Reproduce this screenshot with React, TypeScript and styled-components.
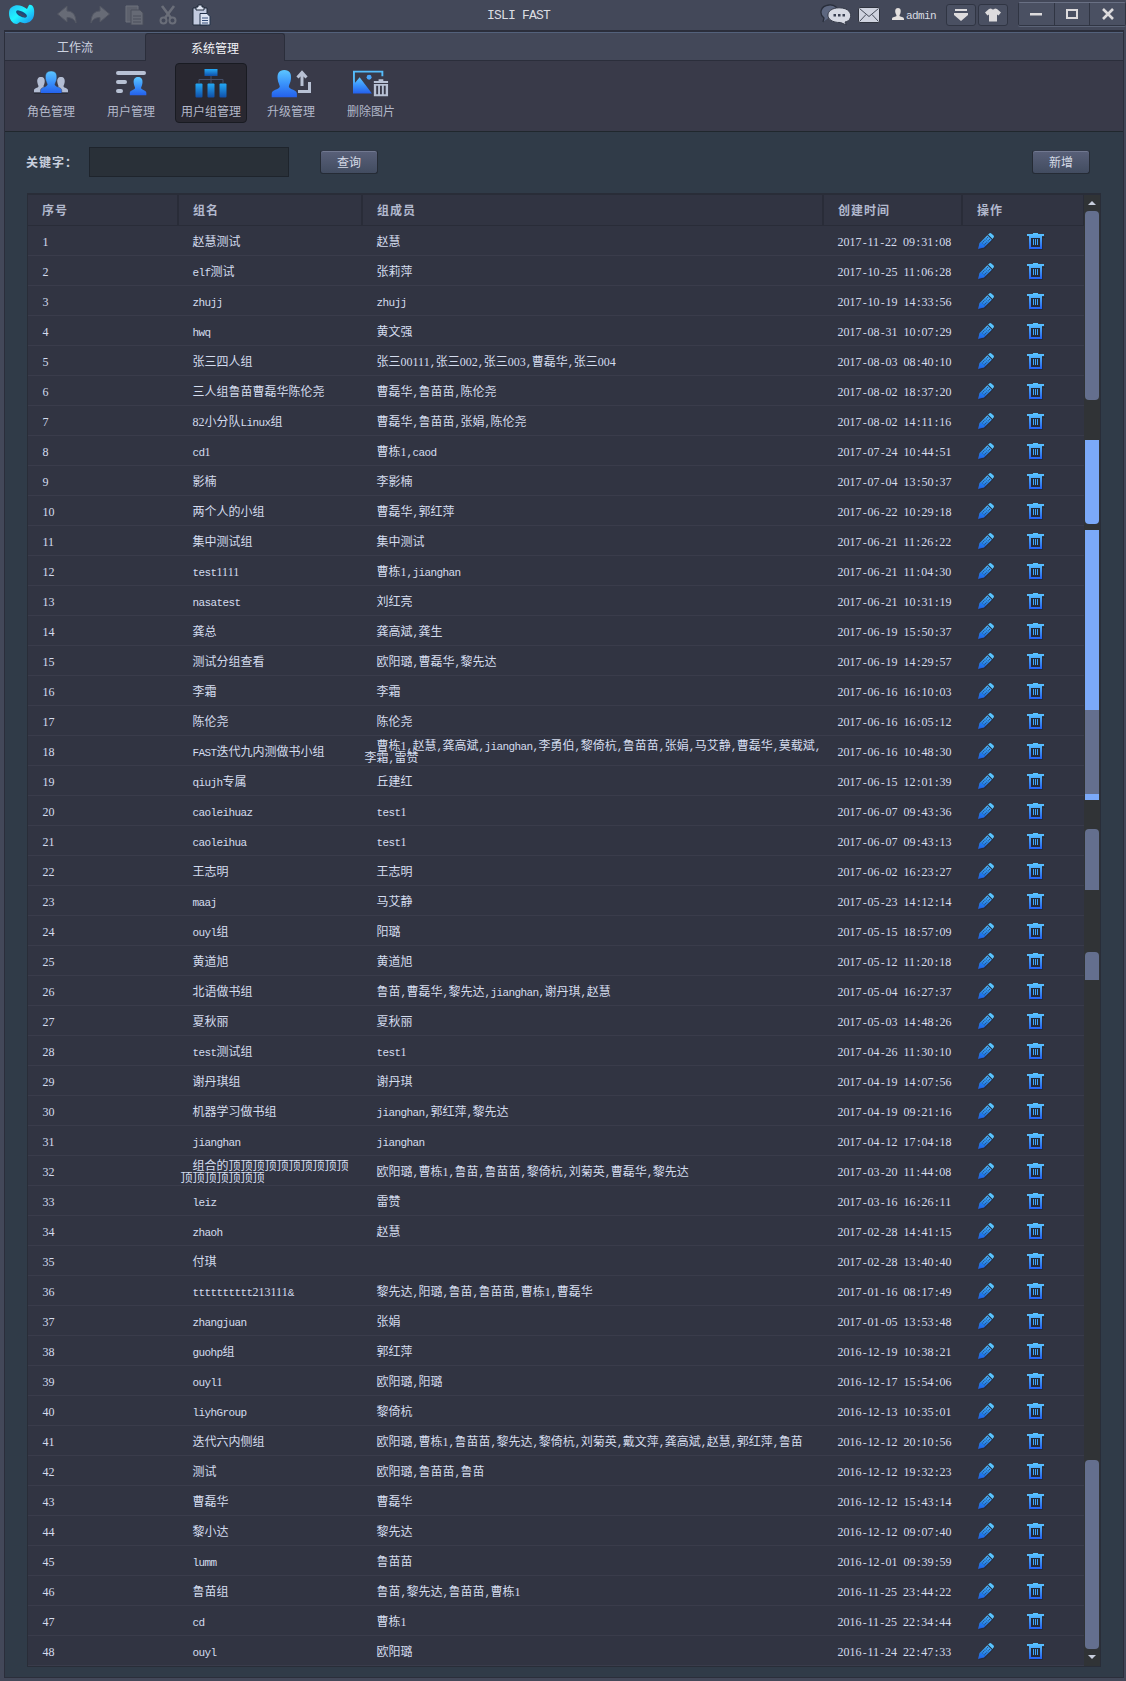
import React from 'react';
import styled, { createGlobalStyle, css } from 'styled-components';

const GlobalStyle = createGlobalStyle`
  * { box-sizing: border-box; }
  html, body { margin: 0; padding: 0; }
  body {
    background: #434859;
    font: 12px/12px "Noto Sans CJK SC", sans-serif;
    color: #d4dcee;
    overflow: hidden;
  }
  svg { display: block; flex: none; }
`;

/* Half-width characters sit on a 6px grid beside 12px ideographs. */
const Digits = styled.span`
  font-family: 'Liberation Serif', serif;
  font-size: 12px;
  line-height: 0;
`;
const Latin = styled.span`
  font-family: 'Liberation Mono', monospace;
  font-size: 11px;
  line-height: 0;
  letter-spacing: -0.6px;
  white-space: pre;
`;

function Mixed({ text }: { text: string }) {
  const parts = text.match(/[0-9]+|[\x20-\x2f\x3a-\x7e]+|[^\x20-\x7e]+/g) || [];
  return (
    <>
      {parts.map((p, i) =>
        /^[0-9]/.test(p) ? <Digits key={i}>{p}</Digits> : /^[\x20-\x7e]/.test(p) ? <Latin key={i}>{p}</Latin> : p
      )}
    </>
  );
}

const Window = styled.div`
  width: 1126px;
  height: 1681px;
  display: flex;
  flex-direction: column;
  padding: 0 2px 3px 4px;
  background: #434859;
`;

const TitleBar = styled.header`
  height: 30px;
  flex: none;
  display: grid;
  grid-template-columns: 483px 333px 1fr;
  margin-right: -2px;
`;
const QuickTools = styled.div`
  display: flex;
  align-items: flex-start;
  padding: 4px 0 0 4px;
`;
const Tool = styled.div<{ $ml: number; $dim?: boolean }>`
  margin-left: ${p => p.$ml}px;
  opacity: ${p => (p.$dim ? 0.9 : 1)};
`;
const AppTitle = styled.div`
  font: 13px/30px 'Liberation Mono', monospace;
  letter-spacing: -0.8px;
  color: #dcdde2;
  white-space: pre;
  padding-top: 1px;
`;
const StatusArea = styled.div`
  display: flex;
  align-items: flex-start;
`;
const StatusIcon = styled.div<{ $left: number; $top: number }>`
  padding: ${p => p.$top}px 0 0 ${p => p.$left}px;
`;
const UserName = styled.span`
  width: 39px;
  padding-left: 2px;
  line-height: 28px;
  color: #d9dbe2;
`;
const SquareButton = styled.div`
  width: 30px;
  height: 22px;
  margin: 4px 2px 0 0;
  border: 1px solid #303543;
  border-radius: 3px;
  background: #4a5062;
  display: flex;
  align-items: center;
  justify-content: center;
`;
const WindowControls = styled.div`
  display: flex;
  margin: 2px 0 0 8px;
  height: 24px;
  width: 108px;
  border: 1px solid #303543;
  border-top-color: #697084;
  box-shadow: 0 1px #5b6377;
  border-radius: 2px;
  background: #4a5062;
`;
const WindowControl = styled.div`
  flex: 1;
  display: flex;
  align-items: center;
  justify-content: center;
  & + & { border-left: 1px solid #303543; }
`;

const Frame = styled.div`
  flex: 1;
  display: flex;
  flex-direction: column;
  border: 1px solid #2b2e3b;
  border-top-width: 2px;
  background: #303b48;
`;
const Tabs = styled.nav`
  height: 29px;
  flex: none;
  display: flex;
  border-top: 1px solid #53617b;
  border-bottom: 1px solid #2b2e3b;
  background: #434859;
`;
const Tab = styled.div<{ $active?: boolean }>`
  width: 140px;
  text-align: center;
  line-height: 27px;
  color: #cdd3e0;
  ${p => p.$active && css`
    height: 28px;
    line-height: 27px;
    color: #f2f3f7;
    background: #393a49;
    border: 1px solid #2b2e3b;
    border-bottom: 0;
    border-radius: 3px 3px 0 0;
  `}
`;
const Ribbon = styled.div`
  height: 71px;
  flex: none;
  display: flex;
  gap: 8px;
  padding: 2px 10px 0;
  background: #393a49;
  border-bottom: 1px solid #20272d;
`;
const RibbonItem = styled.div<{ $active?: boolean }>`
  width: 72px;
  height: 60px;
  display: flex;
  flex-direction: column;
  align-items: center;
  border: 1px solid ${p => (p.$active ? '#191b22' : 'transparent')};
  border-radius: 4px;
  background: ${p => (p.$active ? '#292831' : 'transparent')};
  color: #b3b8ca;
  padding-top: 4px;
  white-space: nowrap;
`;
const RibbonLabel = styled.div`
  margin-top: 6px;
  line-height: 14px;
`;

const SearchBar = styled.div`
  height: 61px;
  flex: none;
  display: flex;
  align-items: center;
  padding: 0 33px 1px 21px;
`;
const FieldLabel = styled.label`
  width: 63px;
  font-weight: 700;
  letter-spacing: 1px;
  color: #c9d0de;
`;
const Field = styled.input`
  width: 200px;
  height: 30px;
  border: 1px solid #1e242c;
  background: #293038;
  color: #d0d9ec;
  outline: 0;
  padding: 0 6px;
`;
const Button = styled.button<{ $push?: boolean }>`
  width: 58px;
  height: 24px;
  padding: 0;
  margin-left: ${p => (p.$push ? 'auto' : '31px')};
  border: 1px solid #252b35;
  border-top-color: #303746;
  border-radius: 3px;
  background: linear-gradient(#596079, #424c60);
  box-shadow: inset 0 1px #717890;
  font: 12px/20px "Noto Sans CJK SC", sans-serif;
  color: #d5dae6;
`;

const TablePanel = styled.section`
  width: 1074px;
  height: 1474px;
  margin-left: 22px;
  display: flex;
  border: 1px solid #292d38;
  border-top-width: 2px;
  background: #313442;
`;
const Table = styled.div`
  width: 1056px;
`;
const rowGrid = css`
  display: grid;
  grid-template-columns: 151px 184px 461px 139px 121px;
`;
const HeadRow = styled.div`
  ${rowGrid}
  height: 31px;
  border-bottom: 1px solid #292c38;
`;
const HeadCell = styled.div`
  padding: 9px 0 0 14px;
  font-weight: 700;
  letter-spacing: 1px;
  color: #b2b9ce;
  border-right: 2px solid #292c38;
  &:last-child { border-right-width: 1px; }
`;
const Row = styled.div`
  ${rowGrid}
  height: 30px;
  border-bottom: 1px solid #3a3c4b;
  align-items: center;
`;
const Cell = styled.div`
  padding-left: 1.5px;
  text-indent: 12px;
  white-space: pre;
  line-height: 12px;
  & > * { text-indent: 0; }
  &:first-child { padding-left: 2.5px; }
`;
const Actions = styled.div`
  display: flex;
  gap: 32px;
  padding: 2px 0 0 15px;
`;

const Track = styled.div`
  width: 16px;
  display: flex;
  flex-direction: column;
  align-items: center;
  background: #303336;
`;
const Arrow = styled.div<{ $down?: boolean }>`
  height: 16px;
  display: flex;
  align-items: center;
  transform: ${p => (p.$down ? 'rotate(180deg)' : 'none')};
`;
const Piece = styled.div<{ $h: number; $gap?: number; $blue?: boolean; $r?: string }>`
  width: 14px;
  flex: none;
  height: ${p => p.$h}px;
  margin-top: ${p => p.$gap || 0}px;
  border-radius: ${p => p.$r || '0'};
  background: ${p => (p.$blue ? '#7ba9f8' : '#646f8e')};
`;

const Gradients = () => (
  <svg width="0" height="0" aria-hidden>
    <defs>
      <linearGradient id="blue" x1="0" y1="0" x2="0" y2="1">
        <stop offset="0" stopColor="#5cc6ff" />
        <stop offset="0.5" stopColor="#3a92fb" />
        <stop offset="1" stopColor="#2460ec" />
      </linearGradient>
      <linearGradient id="trash" gradientUnits="userSpaceOnUse" x1="0" y1="0" x2="0" y2="17">
        <stop offset="0" stopColor="#5cc8ff" />
        <stop offset="1" stopColor="#205af0" />
      </linearGradient>
      <linearGradient id="pen" gradientUnits="userSpaceOnUse" x1="0" y1="0" x2="0" y2="17">
        <stop offset="0" stopColor="#58c4ff" />
        <stop offset="0.6" stopColor="#2a86e8" />
        <stop offset="1" stopColor="#1d50d8" />
      </linearGradient>
      <linearGradient id="node" x1="0" y1="0" x2="0" y2="1">
        <stop offset="0" stopColor="#24a9f5" />
        <stop offset="1" stopColor="#104fa8" />
      </linearGradient>
      <linearGradient id="logo" x1="0" y1="0" x2="1" y2="1">
        <stop offset="0" stopColor="#25b9f5" />
        <stop offset="0.45" stopColor="#20f3ff" />
        <stop offset="1" stopColor="#1687ef" />
      </linearGradient>
    </defs>
  </svg>
);

const Pencil = () => (
  <svg width="17" height="17" viewBox="0 0 17 17">
    <path d="M1 17 L2.4 11.8 L11.2 3 L16.4 5.6 L7 15.4Z" fill="#232633" opacity=".6" />
    <path d="M0 16 L1.6 10 L9.4 2.2 L13.9 6.7 L6 14.5Z" fill="url(#pen)" />
    <path d="M10.1 1.6 L11.6 .3 Q12.5 -.3 13.3 .4 L15.6 2.6 Q16.3 3.4 15.7 4.2 L14.5 5.9Z" fill="#58c4ff" />
    <path d="M3.9 10.3 L10.2 4 M5.8 12.2 L12.1 5.9" stroke="#1f4f80" strokeWidth="1.1" strokeDasharray="1 .9" />
    <path d="M1.9 10.4 L5.6 14.1" stroke="#1a74f4" strokeWidth="1.4" />
  </svg>
);
const Trash = () => (
  <svg width="18" height="17" viewBox="0 0 18 17">
    <path d="M3 5h12.6v12H3z M1 4h17v1H1z" fill="#242733" />
    <path fillRule="evenodd" fill="url(#trash)" d="M0 1h6V0h5v1h6v2h-2v13H2V3H0z M4 5v9h9V5z" />
    <path d="M6.5 6v6 M8.5 6v6 M10.5 6v6" stroke="#3fa6fb" />
  </svg>
);

const bust = 'M6 0 C9 0 10 2 9.7 5 C9.5 7 8.7 8 8.5 9 C9 11 13 10.5 13 13 V15 H-1 V13 C-1 10.5 3 11 3.5 9 C3.3 8 2.5 7 2.3 5 C2 2 3 0 6 0Z';

const RolesIcon = () => (
  <svg width="38" height="28" viewBox="0 0 38 28">
    <g fill="#b3bdd3">
      <g transform="translate(3 8)"><path d={bust} transform="scale(1 1.02)" /></g>
      <g transform="translate(23 8)"><path d={bust} transform="scale(1 1.02)" /></g>
    </g>
    <g transform="translate(10 2)">
      <path d={bust} transform="scale(1.52 1.5)" fill="url(#blue)" stroke="#393a49" strokeWidth=".3" />
    </g>
    <path d="M2 24.5h34" stroke="#292d38" />
  </svg>
);
const UsersIcon = () => (
  <svg width="32" height="28" viewBox="0 0 32 28">
    <path d="M3 4H29 M3 13H10 M3 22H6" stroke="#b8c1d4" strokeWidth="4" strokeLinecap="round" />
    <g transform="translate(16 8)"><path d={bust} transform="scale(1.18 1.22)" fill="url(#blue)" /></g>
  </svg>
);
const GroupsIcon = () => (
  <svg width="34" height="30" viewBox="0 0 34 30">
    <path d="M17 8V15 M5 15V11.5H29V15" fill="none" stroke="#46506a" />
    <rect x="10.5" y="1" width="13" height="7" fill="url(#node)" />
    <rect x="1.5" y="15.5" width="7" height="14" rx="1" fill="url(#node)" />
    <rect x="13.5" y="15.5" width="7" height="14" rx="1" fill="url(#node)" />
    <rect x="25.5" y="15.5" width="7" height="14" rx="1" fill="url(#node)" />
  </svg>
);
const UpgradeIcon = () => (
  <svg width="40" height="29" viewBox="0 0 40 29">
    <g transform="translate(2.5 1)"><path d={bust} transform="scale(1.8 1.82)" fill="url(#blue)" /></g>
    <path d="M31 17V5 M26.5 8.5L31 3.5L35.5 8.5" fill="none" stroke="#b8c1d4" strokeWidth="3" />
    <path d="M27 22.5H38.5V13" fill="none" stroke="#b8c1d4" strokeWidth="3" />
  </svg>
);
const RemoveImageIcon = () => (
  <svg width="36" height="30" viewBox="0 0 38 30">
    <path d="M1 25V3H31V8" fill="none" stroke="#55bcfb" strokeWidth="2" />
    <path d="M0 10V26H20L7 9L2 15Z" fill="url(#blue)" />
    <circle cx="17" cy="9" r="2.6" fill="#48a5fb" />
    <path fillRule="evenodd" fill="#b8c1d4" d="M22 13h5v-2h5v2h5v2H22z M22 16h15v13H22z M24.5 18v9h2v-9z M28.5 18v9h2v-9z M32.5 18v9h2v-9z" />
  </svg>
);

const Logo = () => (
  <svg width="28" height="22" viewBox="0 0 28 22">
    <path d="M4 3 C8 0 14 1 19 5 L21 1 C25 0 27 5 26 11 C25 18 18 21 12 18 L9 20 C4 20 1 15 1 9 C1 6 2 4 4 3Z" fill="url(#logo)" />
    <ellipse cx="13.5" cy="10" rx="6" ry="2.6" transform="rotate(28 13.5 10)" fill="#1b4a7c" />
    <path d="M10 9 C12.5 9 14 13 17.500 12.500" fill="none" stroke="#3e4b64" strokeWidth="1.5" />
  </svg>
);
const Undo = ({ flip }: { flip?: boolean }) => (
  <svg width="20" height="21" viewBox="0 0 20 21">
    <path
      transform={flip ? 'translate(20 0) scale(-1 1)' : undefined}
      d="M0.5 10 L10 2 V7 C16 7 19 11 19 19 C17 15 14 13.5 10 13.5 V18Z"
      fill="#6b6f7a"
      stroke="#555965"
    />
  </svg>
);
const Copy = () => (
  <svg width="20" height="21" viewBox="0 0 20 21">
    <path d="M1 2h12v16H1z" fill="#606470" stroke="#737680" />
    <path d="M6 6h9l3 3v12H6z" fill="#6a6e79" stroke="#4c505c" />
    <path d="M8 12h8 M8 15h8 M8 18h8" stroke="#4d515d" />
  </svg>
);
const Scissors = () => (
  <svg width="18" height="21" viewBox="0 0 18 21">
    <path d="M3 2 L12 14 M15 2 L6 14" stroke="#6f737d" strokeWidth="2.6" />
    <circle cx="4.5" cy="16.5" r="3" fill="none" stroke="#6f737d" strokeWidth="2" />
    <circle cx="13.5" cy="16.5" r="3" fill="none" stroke="#6f737d" strokeWidth="2" />
  </svg>
);
const Paste = () => (
  <svg width="19" height="22" viewBox="0 0 19 22">
    <path d="M1 4h14v17H1z" fill="#c3cbe0" stroke="#202a3b" />
    <path d="M4 6V3h2V1h4v2h2v3z" fill="#dfe5f2" stroke="#202a3b" />
    <path d="M8 9.5h7l3 3V21H8z" fill="#dce3f2" stroke="#23324b" />
    <path d="M10 14h6 M10 16.5h6 M10 19h6" stroke="#344d78" />
  </svg>
);
const Chat = () => (
  <svg width="31" height="22" viewBox="0 0 31 22">
    <path d="M3 18 L4 14 C-1 10 0 2 9 1 C15 .5 18 4 18 7" fill="#5d6780" stroke="#292e3b" strokeWidth="1.3" />
    <path d="M19 3.8 C34 3.8 33 17 25 18 L26.5 21 L20.5 18.5 C4 19 4 4 19 3.8Z" fill="#d6d9e3" stroke="#343947" />
    <path d="M13.500 10h2.500v2.500h-2.500z M18 10h2.500v2.500h-2.500z M22.500 10h2.500v2.500h-2.500z" fill="#394052" />
  </svg>
);
const Mail = () => (
  <svg width="22" height="16" viewBox="0 0 22 16">
    <rect x=".5" y=".5" width="21" height="15" rx="1" fill="#cfd3df" stroke="#30343f" />
    <path d="M1.5 1.5 L11 9.5 L20.5 1.5 M1.5 14.5 L8 7.5 M20.5 14.5 L14 7.5" fill="none" stroke="#454b59" />
  </svg>
);
const Person = () => (
  <svg width="12" height="13" viewBox="0 0 12 13">
    <path d="M6 0C9 0 9 3 8.5 5C8 6.3 7.5 7 7.5 8C8 9 12 8.5 12 11V12H0V11C0 8.5 4 9 4.5 8C4.5 7 4 6.3 3.5 5C3 3 3 0 6 0Z" fill="#e4e0de" />
  </svg>
);

type Entry = [string, string, string];
const entries: Entry[] = [
  ['赵慧测试', '赵慧', '2017-11-22 09:31:08'],
  ['elf测试', '张莉萍', '2017-10-25 11:06:28'],
  ['zhujj', 'zhujj', '2017-10-19 14:33:56'],
  ['hwq', '黄文强', '2017-08-31 10:07:29'],
  ['张三四人组', '张三00111,张三002,张三003,曹磊华,张三004', '2017-08-03 08:40:10'],
  ['三人组鲁苗曹磊华陈伦尧', '曹磊华,鲁苗苗,陈伦尧', '2017-08-02 18:37:20'],
  ['82小分队Linux组', '曹磊华,鲁苗苗,张娟,陈伦尧', '2017-08-02 14:11:16'],
  ['cd1', '曹栋1,caod', '2017-07-24 10:44:51'],
  ['影楠', '李影楠', '2017-07-04 13:50:37'],
  ['两个人的小组', '曹磊华,郭红萍', '2017-06-22 10:29:18'],
  ['集中测试组', '集中测试', '2017-06-21 11:26:22'],
  ['test1111', '曹栋1,jianghan', '2017-06-21 11:04:30'],
  ['nasatest', '刘红亮', '2017-06-21 10:31:19'],
  ['龚总', '龚高斌,龚生', '2017-06-19 15:50:37'],
  ['测试分组查看', '欧阳璐,曹磊华,黎先达', '2017-06-19 14:29:57'],
  ['李霜', '李霜', '2017-06-16 16:10:03'],
  ['陈伦尧', '陈伦尧', '2017-06-16 16:05:12'],
  ['FAST迭代九内测做书小组', '曹栋1,赵慧,龚高斌,jianghan,李勇伯,黎倚杭,鲁苗苗,张娟,马艾静,曹磊华,莫载斌,\n李霜,雷赞', '2017-06-16 10:48:30'],
  ['qiujh专属', '丘建红', '2017-06-15 12:01:39'],
  ['caoleihuaz', 'test1', '2017-06-07 09:43:36'],
  ['caoleihua', 'test1', '2017-06-07 09:43:13'],
  ['王志明', '王志明', '2017-06-02 16:23:27'],
  ['maaj', '马艾静', '2017-05-23 14:12:14'],
  ['ouyl组', '阳璐', '2017-05-15 18:57:09'],
  ['黄道旭', '黄道旭', '2017-05-12 11:20:18'],
  ['北语做书组', '鲁苗,曹磊华,黎先达,jianghan,谢丹琪,赵慧', '2017-05-04 16:27:37'],
  ['夏秋丽', '夏秋丽', '2017-05-03 14:48:26'],
  ['test测试组', 'test1', '2017-04-26 11:30:10'],
  ['谢丹琪组', '谢丹琪', '2017-04-19 14:07:56'],
  ['机器学习做书组', 'jianghan,郭红萍,黎先达', '2017-04-19 09:21:16'],
  ['jianghan', 'jianghan', '2017-04-12 17:04:18'],
  ['组合的顶顶顶顶顶顶顶顶顶顶\n顶顶顶顶顶顶顶', '欧阳璐,曹栋1,鲁苗,鲁苗苗,黎倚杭,刘菊英,曹磊华,黎先达', '2017-03-20 11:44:08'],
  ['leiz', '雷赞', '2017-03-16 16:26:11'],
  ['zhaoh', '赵慧', '2017-02-28 14:41:15'],
  ['付琪', '', '2017-02-28 13:40:40'],
  ['tttttttttt213111&', '黎先达,阳璐,鲁苗,鲁苗苗,曹栋1,曹磊华', '2017-01-16 08:17:49'],
  ['zhangjuan', '张娟', '2017-01-05 13:53:48'],
  ['guohp组', '郭红萍', '2016-12-19 10:38:21'],
  ['ouyl1', '欧阳璐,阳璐', '2016-12-17 15:54:06'],
  ['liyhGroup', '黎倚杭', '2016-12-13 10:35:01'],
  ['迭代六内侧组', '欧阳璐,曹栋1,鲁苗苗,黎先达,黎倚杭,刘菊英,戴文萍,龚高斌,赵慧,郭红萍,鲁苗', '2016-12-12 20:10:56'],
  ['测试', '欧阳璐,鲁苗苗,鲁苗', '2016-12-12 19:32:23'],
  ['曹磊华', '曹磊华', '2016-12-12 15:43:14'],
  ['黎小达', '黎先达', '2016-12-12 09:07:40'],
  ['lumm', '鲁苗苗', '2016-12-01 09:39:59'],
  ['鲁苗组', '鲁苗,黎先达,鲁苗苗,曹栋1', '2016-11-25 23:44:22'],
  ['cd', '曹栋1', '2016-11-25 22:34:44'],
  ['ouyl', '欧阳璐', '2016-11-24 22:47:33'],
];

const ribbon = [
  { label: '角色管理', Icon: RolesIcon },
  { label: '用户管理', Icon: UsersIcon },
  { label: '用户组管理', Icon: GroupsIcon, active: true },
  { label: '升级管理', Icon: UpgradeIcon },
  { label: '删除图片', Icon: RemoveImageIcon },
];

const IconSlot = styled.div`
  height: 30px;
  display: flex;
  align-items: center;
`;

const Triangle = () => (
  <svg width="8" height="4" viewBox="0 0 8 4"><path d="M0 4L4 0L8 4Z" fill="#c8cede" /></svg>
);

export default function App() {
  return (
    <Window>
      <GlobalStyle />
      <TitleBar>
        <QuickTools>
          <Logo />
          <Tool $ml={21} $dim><Undo /></Tool>
          <Tool $ml={13} $dim><Undo flip /></Tool>
          <Tool $ml={15} $dim><Copy /></Tool>
          <Tool $ml={14} $dim><Scissors /></Tool>
          <Tool $ml={15}><Paste /></Tool>
        </QuickTools>
        <AppTitle>ISLI FAST</AppTitle>
        <StatusArea>
          <StatusIcon $left={0} $top={4}><Chat /></StatusIcon>
          <StatusIcon $left={7} $top={7}><Mail /></StatusIcon>
          <StatusIcon $left={12} $top={8}><Person /></StatusIcon>
          <UserName><Latin>admin</Latin></UserName>
          <Tool $ml={3}>
            <SquareButton>
              <svg width="14" height="12" viewBox="0 0 14 12"><path d="M1 0h12v2H1z M0 4h14v2L7 12L0 6z" fill="#dddbdd" /></svg>
            </SquareButton>
          </Tool>
          <SquareButton>
            <svg width="16" height="14" viewBox="0 0 16 14"><path d="M4 1L6 .5Q8 2.5 10 .5L12 1L16 4.5L13.5 7.5L12 6.5V13.5H4V6.5L2.5 7.5L0 4.5Z" fill="#dddbdd" /></svg>
          </SquareButton>
          <WindowControls>
            <WindowControl><svg width="12" height="3"><path d="M0 0h12v2.5H0z" fill="#dddbdd" /></svg></WindowControl>
            <WindowControl><svg width="12" height="10"><rect x="1" y="1" width="10" height="8" fill="none" stroke="#dddbdd" strokeWidth="2" /></svg></WindowControl>
            <WindowControl><svg width="12" height="12"><path d="M1 1L11 11M11 1L1 11" stroke="#dddbdd" strokeWidth="2.6" /></svg></WindowControl>
          </WindowControls>
        </StatusArea>
      </TitleBar>
      <Frame>
        <Tabs>
          <Tab>工作流</Tab>
          <Tab $active>系统管理</Tab>
        </Tabs>
        <Ribbon>
          {ribbon.map(({ label, Icon, active }) => (
            <RibbonItem key={label} $active={active}>
              <IconSlot><Icon /></IconSlot>
              <RibbonLabel>{label}</RibbonLabel>
            </RibbonItem>
          ))}
        </Ribbon>
        <SearchBar>
          <FieldLabel>关键字：</FieldLabel>
          <Field />
          <Button>查询</Button>
          <Button $push>新增</Button>
        </SearchBar>
        <TablePanel>
          <Table>
            <HeadRow>
              {['序号', '组名', '组成员', '创建时间', '操作'].map(h => <HeadCell key={h}>{h}</HeadCell>)}
            </HeadRow>
            {entries.map(([name, members, created], i) => (
              <Row key={i}>
                <Cell><Mixed text={String(i + 1)} /></Cell>
                <Cell><Mixed text={name} /></Cell>
                <Cell><Mixed text={members} /></Cell>
                <Cell><Mixed text={created} /></Cell>
                <Actions><Pencil /><Trash /></Actions>
              </Row>
            ))}
          </Table>
          <Track>
            <Arrow><Triangle /></Arrow>
            <Piece $h={189} $r="4px" />
            <Piece $h={84} $gap={40} $blue $r="0 0 4px 4px" />
            <Piece $h={180} $gap={6} $blue />
            <Piece $h={84} />
            <Piece $h={6} $blue />
            <Piece $h={61} $gap={29} $r="4px 4px 0 0" />
            <Piece $h={28} $gap={62} $r="4px 4px 0 0" />
            <Piece $h={189} $gap={480} $r="4px" />
            <Arrow $down><Triangle /></Arrow>
          </Track>
        </TablePanel>
      </Frame>
      <Gradients />
    </Window>
  );
}
